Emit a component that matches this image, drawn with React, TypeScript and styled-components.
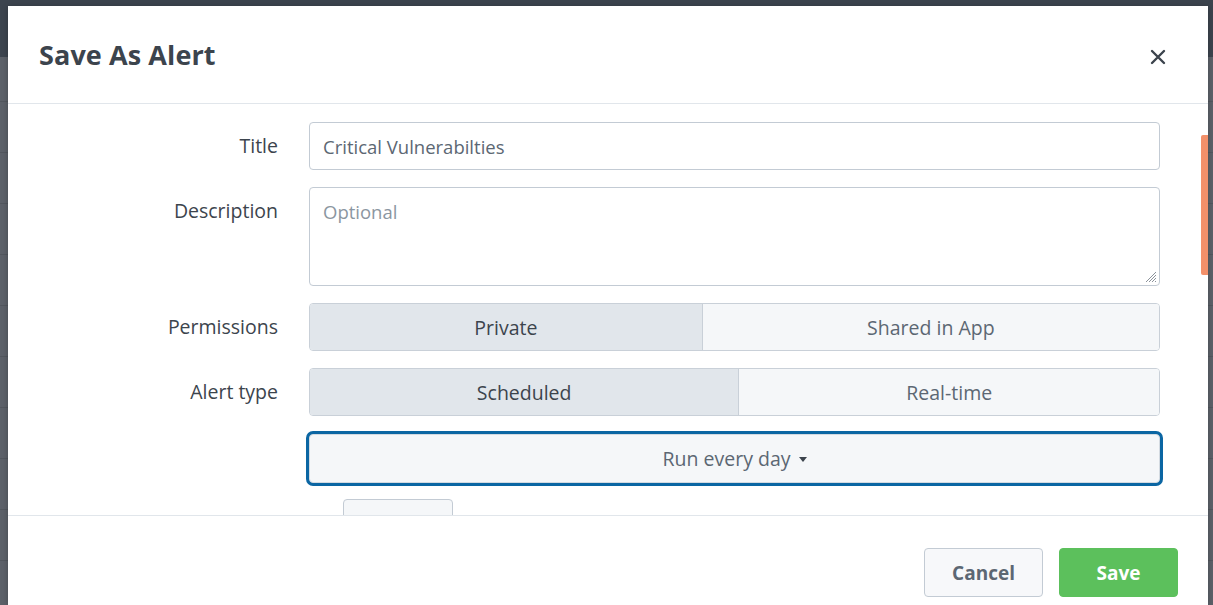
import styled, { createGlobalStyle } from "styled-components";

const GlobalStyle = createGlobalStyle`
    html, body {
        margin: 0;
        padding: 0;
        overflow: hidden;
    }
    body {
        font-family: "Open Sans", "Liberation Sans", sans-serif;
        color: #3c444d;
    }
    * {
        box-sizing: border-box;
    }
`;

const Backdrop = styled.div`
    width: 1213px;
    height: 605px;
    overflow: hidden;
    display: flex;
    padding: 6px 5px 0 8px;
    background:
        linear-gradient(#3c444e, #3c444e) top / 100% 57px no-repeat,
        repeating-linear-gradient(
            180deg,
            #5c6169 0px,
            #5c6169 50px,
            #52575e 50px,
            #52575e 51px
        );
`;

const Modal = styled.div`
    flex: 1;
    display: flex;
    flex-direction: column;
    background: #ffffff;
    box-shadow: 0 1px 6px rgba(0, 0, 0, 0.25);
`;

const Header = styled.div`
    height: 98px;
    flex: none;
    display: flex;
    align-items: center;
    justify-content: space-between;
    padding: 0 40px 0 31px;
    border-bottom: 1px solid #e1e6eb;
`;

const Title = styled.h1`
    margin: 0;
    font-size: 27px;
    font-weight: 700;
    color: #3c444d;
    letter-spacing: 0.1px;
`;

const CloseButton = styled.button`
    border: none;
    background: none;
    padding: 0;
    width: 20px;
    height: 20px;
    display: flex;
    align-items: center;
    justify-content: center;
    color: #3c444d;
    margin-top: 4px;
`;

const Body = styled.div`
    position: relative;
    height: 411px;
    flex: none;
    overflow: hidden;
    padding: 18px 48px 0 0;
    display: grid;
    grid-template-columns: 270px 1fr;
    column-gap: 31px;
    row-gap: 17px;
    align-content: start;
`;

const Label = styled.label`
    text-align: right;
    font-size: 19.5px;
    line-height: 48px;
    color: #3c444d;
`;

const TextInput = styled.div`
    height: 48px;
    border: 1px solid #c3cbd4;
    border-radius: 4px;
    padding: 0 13px;
    display: flex;
    align-items: center;
    font-size: 18.5px;
    color: #5c6773;
    background: #ffffff;
`;

const TextArea = styled.div`
    position: relative;
    height: 99px;
    border: 1px solid #c3cbd4;
    border-radius: 4px;
    padding: 11px 13px;
    font-size: 18.5px;
    color: #8b96a1;
    background: #ffffff;
`;

const ResizeGrip = styled.svg`
    position: absolute;
    right: 2px;
    bottom: 2px;
`;

const ButtonGroup = styled.div`
    height: 48px;
    display: flex;
    border: 1px solid #c9d0d8;
    border-radius: 4px;
    overflow: hidden;
`;

const GroupButton = styled.div<{ $selected?: boolean }>`
    flex: 1 1 auto;
    display: flex;
    align-items: center;
    justify-content: center;
    font-size: 19.5px;
    color: ${(p) => (p.$selected ? "#3c444d" : "#5c6773")};
    background: ${(p) => (p.$selected ? "#e1e6eb" : "#f5f7f9")};
    & + & {
        border-left: 1px solid #c9d0d8;
    }
`;

const Dropdown = styled.div`
    grid-column: 2;
    height: 49px;
    margin-top: 1px;
    display: flex;
    align-items: center;
    justify-content: center;
    gap: 8px;
    border: 1px solid #d3dae1;
    border-radius: 4px;
    background: #f5f7f9;
    box-shadow: 0 0 0 3px #0b66a3;
    font-size: 19.5px;
    color: #5c6773;
`;

const Caret = styled.span`
    width: 0;
    height: 0;
    border-left: 4.5px solid transparent;
    border-right: 4.5px solid transparent;
    border-top: 5px solid #3c444d;
    margin-top: 1px;
`;

const SmallInput = styled.div`
    grid-column: 2;
    width: 110px;
    height: 48px;
    margin-left: 34px;
    margin-top: -1px;
    border: 1px solid #c3cbd4;
    border-radius: 4px;
    background: #f5f7f9;
`;

const ScrollThumb = styled.div`
    position: absolute;
    right: 0;
    top: 31px;
    width: 7px;
    height: 140px;
    border-radius: 2px 0 0 2px;
    background: #f3906a;
`;

const Footer = styled.div`
    flex: 1;
    display: flex;
    justify-content: flex-end;
    align-items: flex-start;
    gap: 16px;
    padding: 32px 30px 0 0;
    border-top: 1px solid #e1e6eb;
`;

const FooterButton = styled.button<{ $primary?: boolean }>`
    width: 119px;
    height: 49px;
    border-radius: 4px;
    font-family: "Open Sans", "Liberation Sans", sans-serif;
    font-size: 19px;
    font-weight: 700;
    border: 1px solid ${(p) => (p.$primary ? "#5cc05c" : "#c3cbd4")};
    background: ${(p) => (p.$primary ? "#5cc05c" : "#f7f8fa")};
    color: ${(p) => (p.$primary ? "#ffffff" : "#5c6773")};
`;

export default function App() {
    return (
        <>
            <GlobalStyle />
            <Backdrop>
                <Modal>
                    <Header>
                        <Title>Save As Alert</Title>
                        <CloseButton aria-label="Close">
                            <svg width="16" height="16" viewBox="0 0 16 16">
                                <path
                                    d="M2 2 L14 14 M14 2 L2 14"
                                    stroke="#3c444d"
                                    strokeWidth="2.4"
                                    strokeLinecap="round"
                                />
                            </svg>
                        </CloseButton>
                    </Header>
                    <Body>
                        <Label>Title</Label>
                        <TextInput>Critical Vulnerabilties</TextInput>

                        <Label>Description</Label>
                        <TextArea>
                            Optional
                            <ResizeGrip width="14" height="14" viewBox="0 0 14 14">
                                <path
                                    d="M13 3 L3 13 M13 6 L6 13 M13 9 L9 13 M13 12 L12 13"
                                    stroke="#8c939b"
                                    strokeWidth="1"
                                />
                            </ResizeGrip>
                        </TextArea>

                        <Label>Permissions</Label>
                        <ButtonGroup>
                            <GroupButton $selected>Private</GroupButton>
                            <GroupButton>Shared in App</GroupButton>
                        </ButtonGroup>

                        <Label>Alert type</Label>
                        <ButtonGroup>
                            <GroupButton $selected>Scheduled</GroupButton>
                            <GroupButton>Real-time</GroupButton>
                        </ButtonGroup>

                        <Dropdown>
                            Run every day <Caret />
                        </Dropdown>

                        <SmallInput />

                        <ScrollThumb />
                    </Body>
                    <Footer>
                        <FooterButton>Cancel</FooterButton>
                        <FooterButton $primary>Save</FooterButton>
                    </Footer>
                </Modal>
            </Backdrop>
        </>
    );
}
